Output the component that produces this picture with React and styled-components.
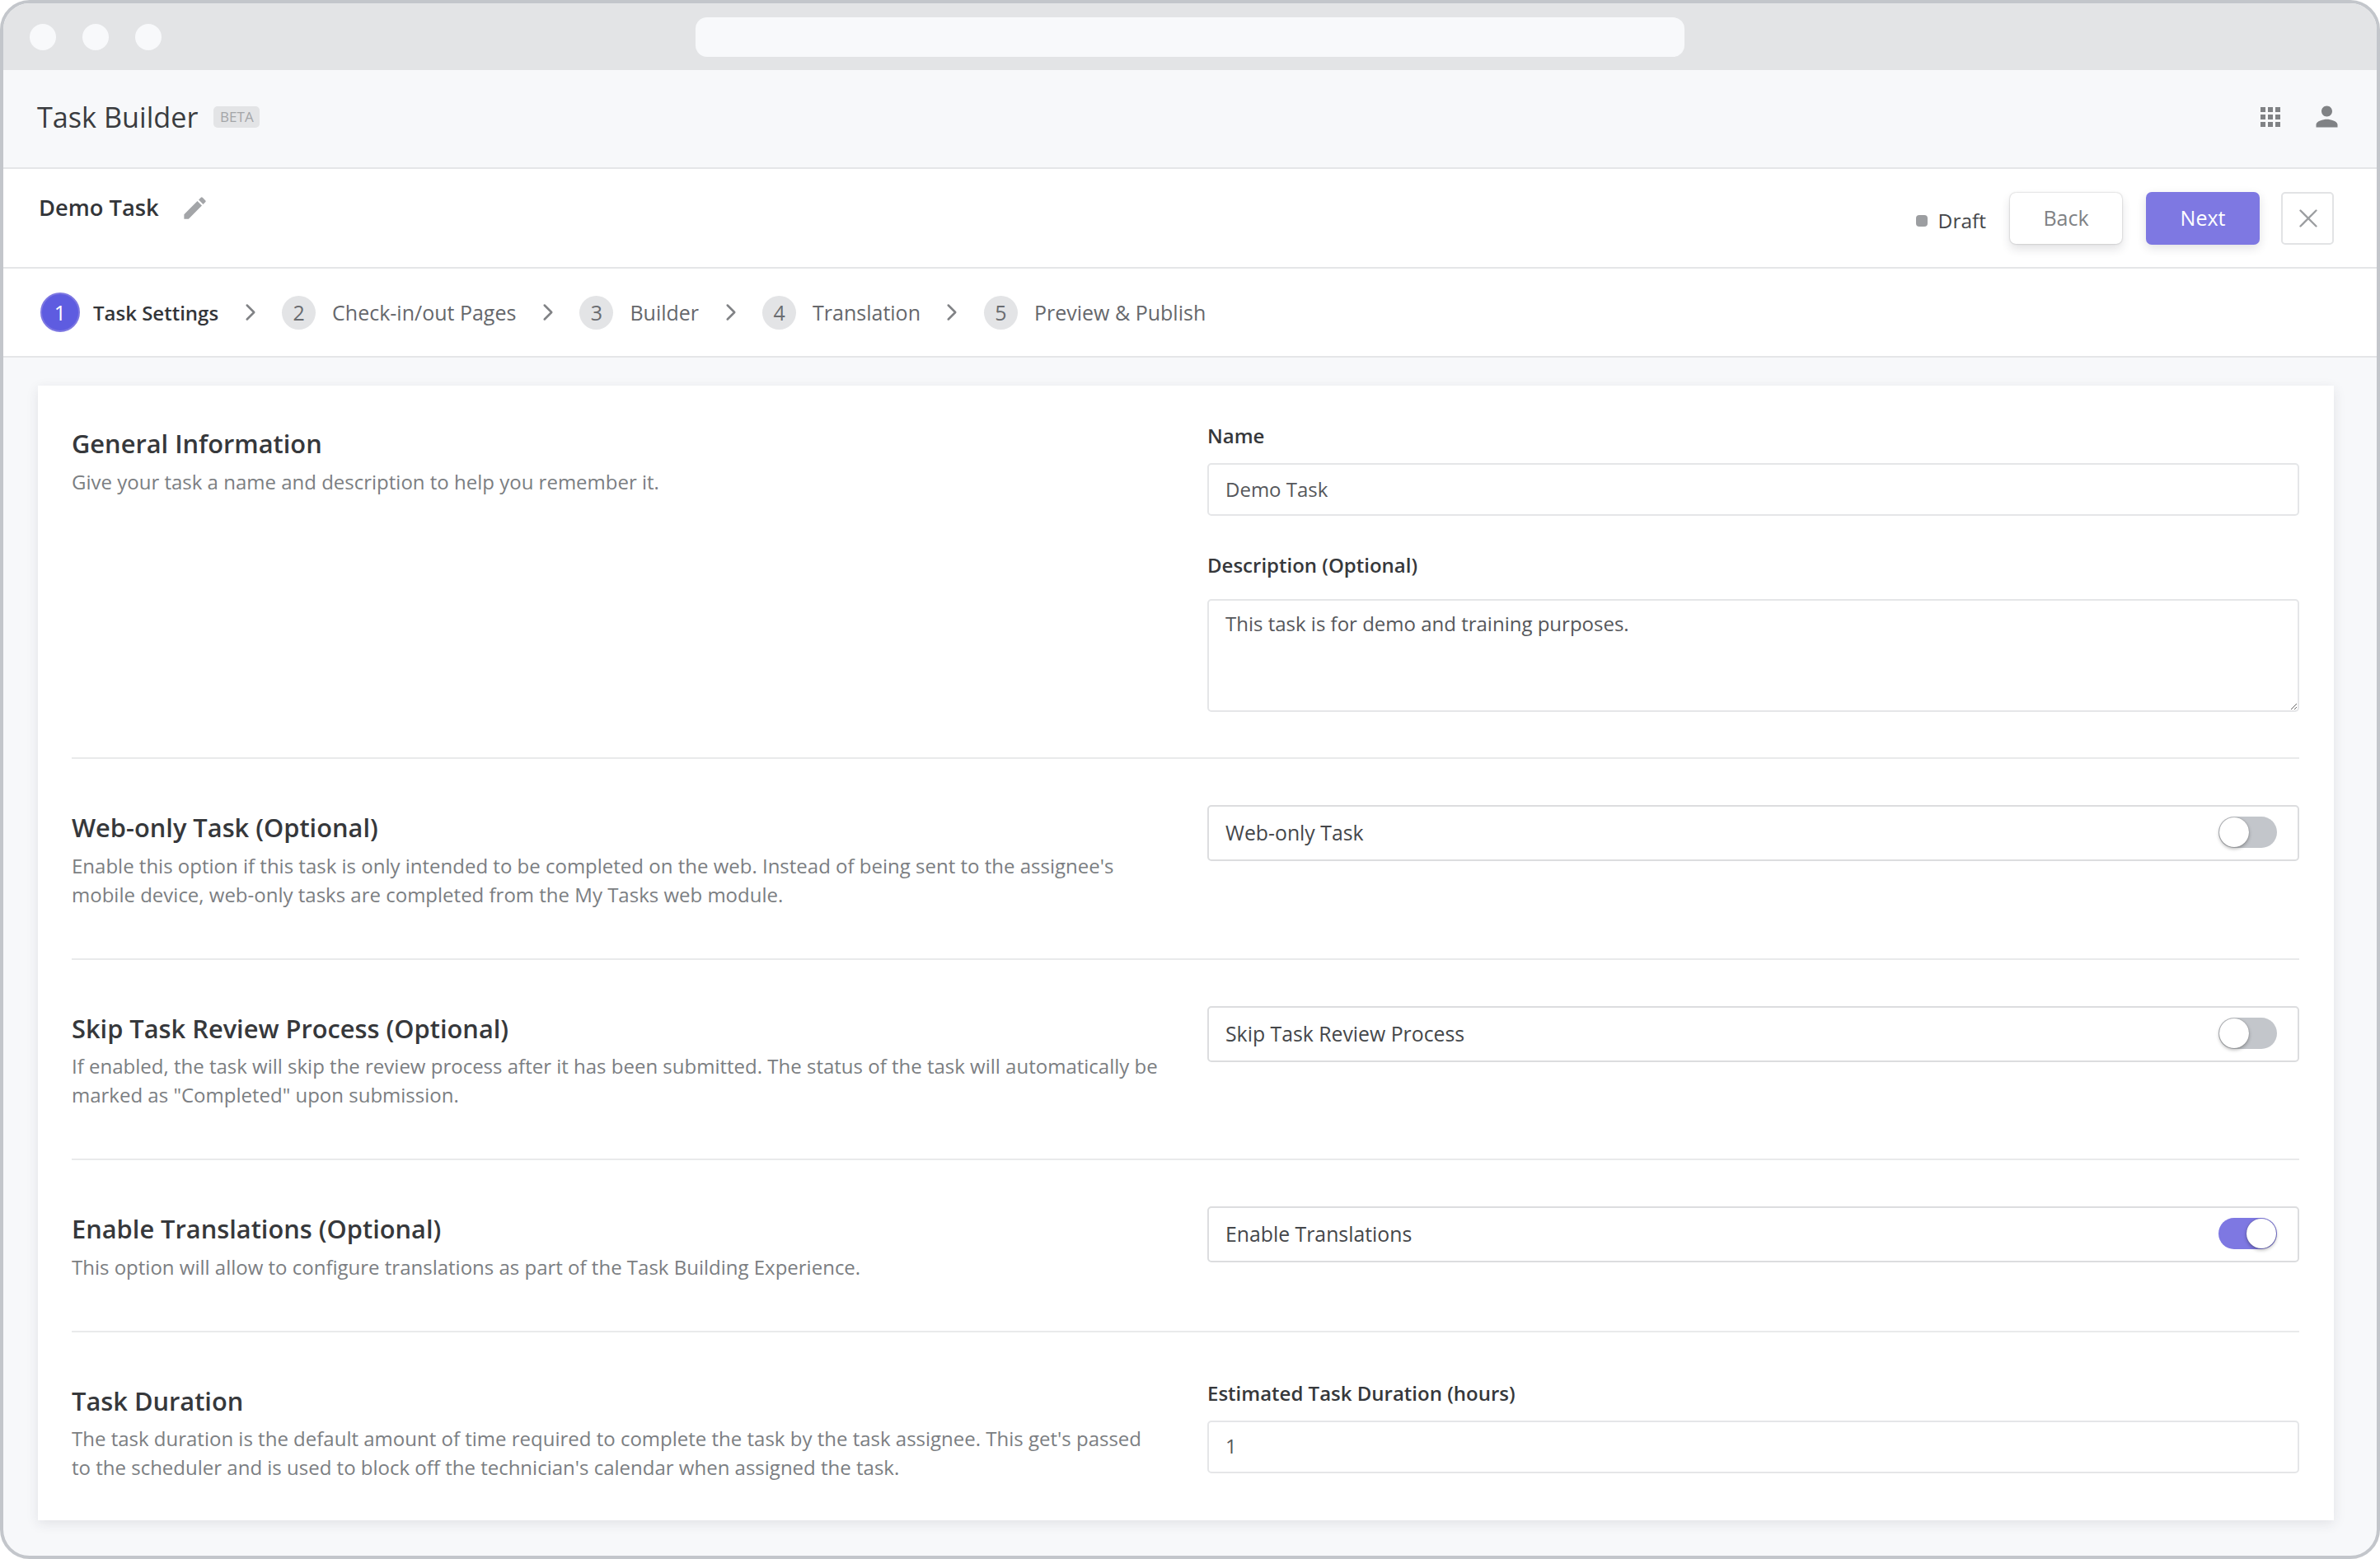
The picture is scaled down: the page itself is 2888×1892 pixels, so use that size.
import React from 'react';
import styled, { createGlobalStyle } from 'styled-components';
import { ChevronRight, X } from 'lucide-react';
import { MdApps, MdEdit, MdPerson } from 'react-icons/md';

const GlobalStyle = createGlobalStyle`
  * {
    box-sizing: border-box;
  }

  body {
    margin: 0;
    background: #fff;
    font-family: "Open Sans", "Noto Sans", sans-serif;
  }
`;

const BrowserFrame = styled.div`
  width: 2888px;
  height: 1892px;
  border: 4px solid #c3c6cb;
  border-radius: 36px;
  background: #f7f8fa;
  overflow: hidden;
  display: flex;
  flex-direction: column;
`;

const ChromeBar = styled.div`
  height: 81px;
  background: #e3e4e6;
  display: flex;
  align-items: center;
  padding-left: 32px;
  flex-shrink: 0;
`;

const ChromeDot = styled.span`
  width: 32px;
  height: 32px;
  border-radius: 50%;
  background: #f8f9fb;
  margin-right: 32px;
`;

const UrlBar = styled.div`
  width: 1200px;
  height: 48px;
  border-radius: 14px;
  background: #f8f9fb;
  margin-left: 616px;
`;

const AppHeader = styled.header`
  height: 120px;
  background: #f7f8fa;
  border-bottom: 2px solid #e5e6e8;
  display: flex;
  align-items: center;
  padding: 0 48px 5px 41px;
  flex-shrink: 0;
`;

const AppTitle = styled.h1`
  margin: 0;
  font-size: 34.2px;
  font-weight: 400;
  color: #3a3c3f;
`;

const BetaBadge = styled.span`
  margin-left: 19px;
  width: 56px;
  height: 26px;
  border-radius: 5px;
  background: #e3e4e6;
  color: #a3a5a8;
  font-size: 17px;
  display: flex;
  align-items: center;
  justify-content: center;
`;

const HeaderIcons = styled.div`
  margin-left: auto;
  display: flex;
  align-items: center;
  gap: 43px;
  color: #808285;
`;

const HeaderIcon = styled.span`
  width: ${props => props.$width}px;
  height: 26px;
  display: flex;
  align-items: center;
  justify-content: center;

  svg {
    flex-shrink: 0;
  }
`;

const TaskBar = styled.div`
  height: 121px;
  background: #fff;
  border-bottom: 2px solid #e5e6e8;
  display: flex;
  align-items: center;
  padding: 0 52px 0 43px;
  flex-shrink: 0;
`;

const TaskName = styled.div`
  display: flex;
  align-items: center;
  gap: 26px;
  margin-bottom: 26px;
  font-size: 27.3px;
  font-weight: 600;
  color: #333539;
`;

const PencilIcon = styled(MdEdit)`
  margin-top: 2px;
  color: #a3a5a8;
  font-size: 35px;
`;

const TaskActions = styled.div`
  margin-left: auto;
  display: flex;
  align-items: center;
`;

const DraftStatus = styled.div`
  display: flex;
  align-items: center;
  gap: 13px;
  margin-top: 6px;
  margin-right: 29px;
  font-size: 24.5px;
  color: #45474a;
`;

const DraftDot = styled.span`
  width: 14px;
  height: 14px;
  border-radius: 4px;
  background: #9c9ea1;
`;

const ActionButton = styled.button`
  width: ${props => (props.$primary ? 138 : 136)}px;
  height: ${props => (props.$primary ? 64 : 62)}px;
  margin-right: ${props => (props.$primary ? 26 : 29)}px;
  padding: 0 0 2px;
  border: none;
  border-radius: 7px;
  font-family: inherit;
  font-size: 25px;
  background: ${props => (props.$primary ? '#7e78e2' : '#fff')};
  color: ${props => (props.$primary ? '#fff' : '#808285')};
  box-shadow: ${props => (props.$primary
    ? '0 4px 12px rgba(40, 40, 60, 0.14)'
    : '0 0 2px rgba(0, 0, 0, 0.3), 0 6px 12px rgba(40, 40, 60, 0.14)')};
`;

const CloseButton = styled.button`
  width: 64px;
  height: 64px;
  padding: 0 0 0 2px;
  border: 2px solid #e2e3e5;
  border-radius: 5px;
  background: #fff;
  color: #9c9ea1;
  display: flex;
  align-items: center;
  justify-content: center;
`;

const StepsBar = styled.nav`
  height: 108px;
  background: #fff;
  border-bottom: 2px solid #e5e6e8;
  display: flex;
  align-items: center;
  padding-left: 45px;
  flex-shrink: 0;
`;

const Step = styled.div`
  display: flex;
  align-items: center;
  gap: ${props => (props.$active ? 16 : 20)}px;
`;

const StepNumber = styled.span`
  width: ${props => (props.$active ? 48 : 41)}px;
  height: ${props => (props.$active ? 48 : 41)}px;
  border-radius: 50%;
  background: ${props => (props.$active ? '#5e5ce0' : '#e3e4e6')};
  border: ${props => (props.$active ? '2px solid #7e78e2' : 'none')};
  color: ${props => (props.$active ? '#fff' : '#6a6c70')};
  font-size: 25px;
  display: flex;
  align-items: center;
  justify-content: center;
`;

const StepLabel = styled.span`
  font-size: ${props => (props.$active ? 24 : 25)}px;
  font-weight: ${props => (props.$active ? 600 : 400)};
  color: ${props => (props.$active ? '#333539' : '#66686c')};
`;

const StepChevron = styled(ChevronRight)`
  flex-shrink: 0;
  margin: 0 21.5px;
  color: #808285;
`;

const Main = styled.main`
  flex: 1;
  padding: 34px 52px 0 42px;
`;

const Card = styled.div`
  height: 1377px;
  padding: 0 42px 0 41px;
  background: #fff;
  box-shadow: 0 4px 14px rgba(40, 44, 60, 0.1);
`;

const Section = styled.section`
  display: grid;
  grid-template-columns: 1fr 1325px;
  column-gap: 56px;
  padding: ${props => props.$top ?? 56}px 0 ${props => props.$bottom ?? 60}px;
  border-bottom: ${props => (props.$last ? 'none' : '2px solid #e9eaeb')};
`;

const SectionInfo = styled.div`
  padding-top: 7px;
`;

const SectionTitle = styled.h2`
  margin: 0 0 8.5px;
  font-size: 30.8px;
  line-height: 40px;
  font-weight: 600;
  color: #36383b;
`;

const SectionText = styled.p`
  margin: 0;
  font-size: 24px;
  line-height: 35px;
  color: #7b7e82;
`;

const Fields = styled.div`
  display: flex;
  flex-direction: column;
`;

const FieldLabel = styled.label`
  display: block;
  margin-top: ${props => props.$gap ?? 0}px;
  margin-bottom: ${props => props.$below ?? 15}px;
  font-size: 24px;
  line-height: 36px;
  font-weight: 600;
  color: #36383b;
`;

const TextInput = styled.input`
  width: 100%;
  height: 64px;
  padding: 0 20px 2px;
  border: 2px solid #e5e6e8;
  border-radius: 5px;
  outline: none;
  background: #fff;
  font-family: inherit;
  font-size: 24px;
  color: #55575b;
`;

const TextArea = styled.textarea`
  display: block;
  width: 100%;
  height: 137px;
  padding: 10px 20px;
  border: 2px solid #e5e6e8;
  border-radius: 5px;
  outline: none;
  background: #fff;
  font-family: inherit;
  font-size: 24px;
  line-height: 35px;
  color: #55575b;
`;

const ToggleBox = styled.div`
  height: 68px;
  padding: 0 25px 2px 20px;
  border: 2px solid #dcdddf;
  border-radius: 5px;
  display: flex;
  align-items: center;
  justify-content: space-between;
  font-size: 24.8px;
  color: #45474a;
`;

const ToggleTrack = styled.span`
  width: 71px;
  height: 38px;
  padding: 1px;
  border-radius: 19px;
  background: ${props => (props.$on ? '#7e78e2' : '#c3c6cb')};
  display: flex;
  justify-content: ${props => (props.$on ? 'flex-end' : 'flex-start')};
`;

const ToggleThumb = styled.span`
  width: 36px;
  height: 36px;
  border-radius: 50%;
  background: #fff;
  box-shadow: 0 0 1px rgba(0, 0, 0, 0.4), 0 2px 4px rgba(0, 0, 0, 0.3);
`;

const steps = ['Task Settings', 'Check-in/out Pages', 'Builder', 'Translation', 'Preview & Publish'];

const toggleSections = [
  {
    title: 'Web-only Task (Optional)',
    text: "Enable this option if this task is only intended to be completed on the web. Instead of being sent to the assignee's mobile device, web-only tasks are completed from the My Tasks web module.",
    label: 'Web-only Task',
    on: false
  },
  {
    title: 'Skip Task Review Process (Optional)',
    text: 'If enabled, the task will skip the review process after it has been submitted. The status of the task will automatically be marked as "Completed" upon submission.',
    label: 'Skip Task Review Process',
    on: false
  },
  {
    title: 'Enable Translations (Optional)',
    text: 'This option will allow to configure translations as part of the Task Building Experience.',
    label: 'Enable Translations',
    on: true
  }
];

const App = () => (
  <>
    <GlobalStyle />
    <BrowserFrame>
      <ChromeBar>
        <ChromeDot />
        <ChromeDot />
        <ChromeDot />
        <UrlBar />
      </ChromeBar>

      <AppHeader>
        <AppTitle>Task Builder</AppTitle>
        <BetaBadge>BETA</BetaBadge>
        <HeaderIcons>
          <HeaderIcon $width={24}><MdApps size={36} /></HeaderIcon>
          <HeaderIcon $width={26}><MdPerson size={39} /></HeaderIcon>
        </HeaderIcons>
      </AppHeader>

      <TaskBar>
        <TaskName>
          Demo Task
          <PencilIcon />
        </TaskName>
        <TaskActions>
          <DraftStatus>
            <DraftDot />
            Draft
          </DraftStatus>
          <ActionButton>Back</ActionButton>
          <ActionButton $primary>Next</ActionButton>
          <CloseButton><X size={38} strokeWidth={1.5} /></CloseButton>
        </TaskActions>
      </TaskBar>

      <StepsBar>
        {steps.map((label, i) => (
          <React.Fragment key={label}>
            <Step $active={i === 0}>
              <StepNumber $active={i === 0}>{i + 1}</StepNumber>
              <StepLabel $active={i === 0}>{label}</StepLabel>
            </Step>
            {i < steps.length - 1 && <StepChevron size={34} strokeWidth={1.8} />}
          </React.Fragment>
        ))}
      </StepsBar>

      <Main>
        <Card>
          <Section $top={43} $bottom={55}>
            <SectionInfo>
              <SectionTitle>General Information</SectionTitle>
              <SectionText>Give your task a name and description to help you remember it.</SectionText>
            </SectionInfo>
            <Fields>
              <FieldLabel>Name</FieldLabel>
              <TextInput readOnly value="Demo Task" />
              <FieldLabel $gap={42} $below={23}>Description (Optional)</FieldLabel>
              <TextArea readOnly value="This task is for demo and training purposes." />
            </Fields>
          </Section>

          {toggleSections.map(section => (
            <Section key={section.label}>
              <SectionInfo>
                <SectionTitle>{section.title}</SectionTitle>
                <SectionText>{section.text}</SectionText>
              </SectionInfo>
              <Fields>
                <ToggleBox>
                  {section.label}
                  <ToggleTrack $on={section.on}><ToggleThumb /></ToggleTrack>
                </ToggleBox>
              </Fields>
            </Section>
          ))}

          <Section $last $bottom={46}>
            <SectionInfo>
              <SectionTitle>Task Duration</SectionTitle>
              <SectionText>The task duration is the default amount of time required to complete the task by the task assignee. This get's passed to the scheduler and is used to block off the technician's calendar when assigned the task.</SectionText>
            </SectionInfo>
            <Fields>
              <FieldLabel>Estimated Task Duration (hours)</FieldLabel>
              <TextInput readOnly value="1" />
            </Fields>
          </Section>
        </Card>
      </Main>
    </BrowserFrame>
  </>
);

export default App;
